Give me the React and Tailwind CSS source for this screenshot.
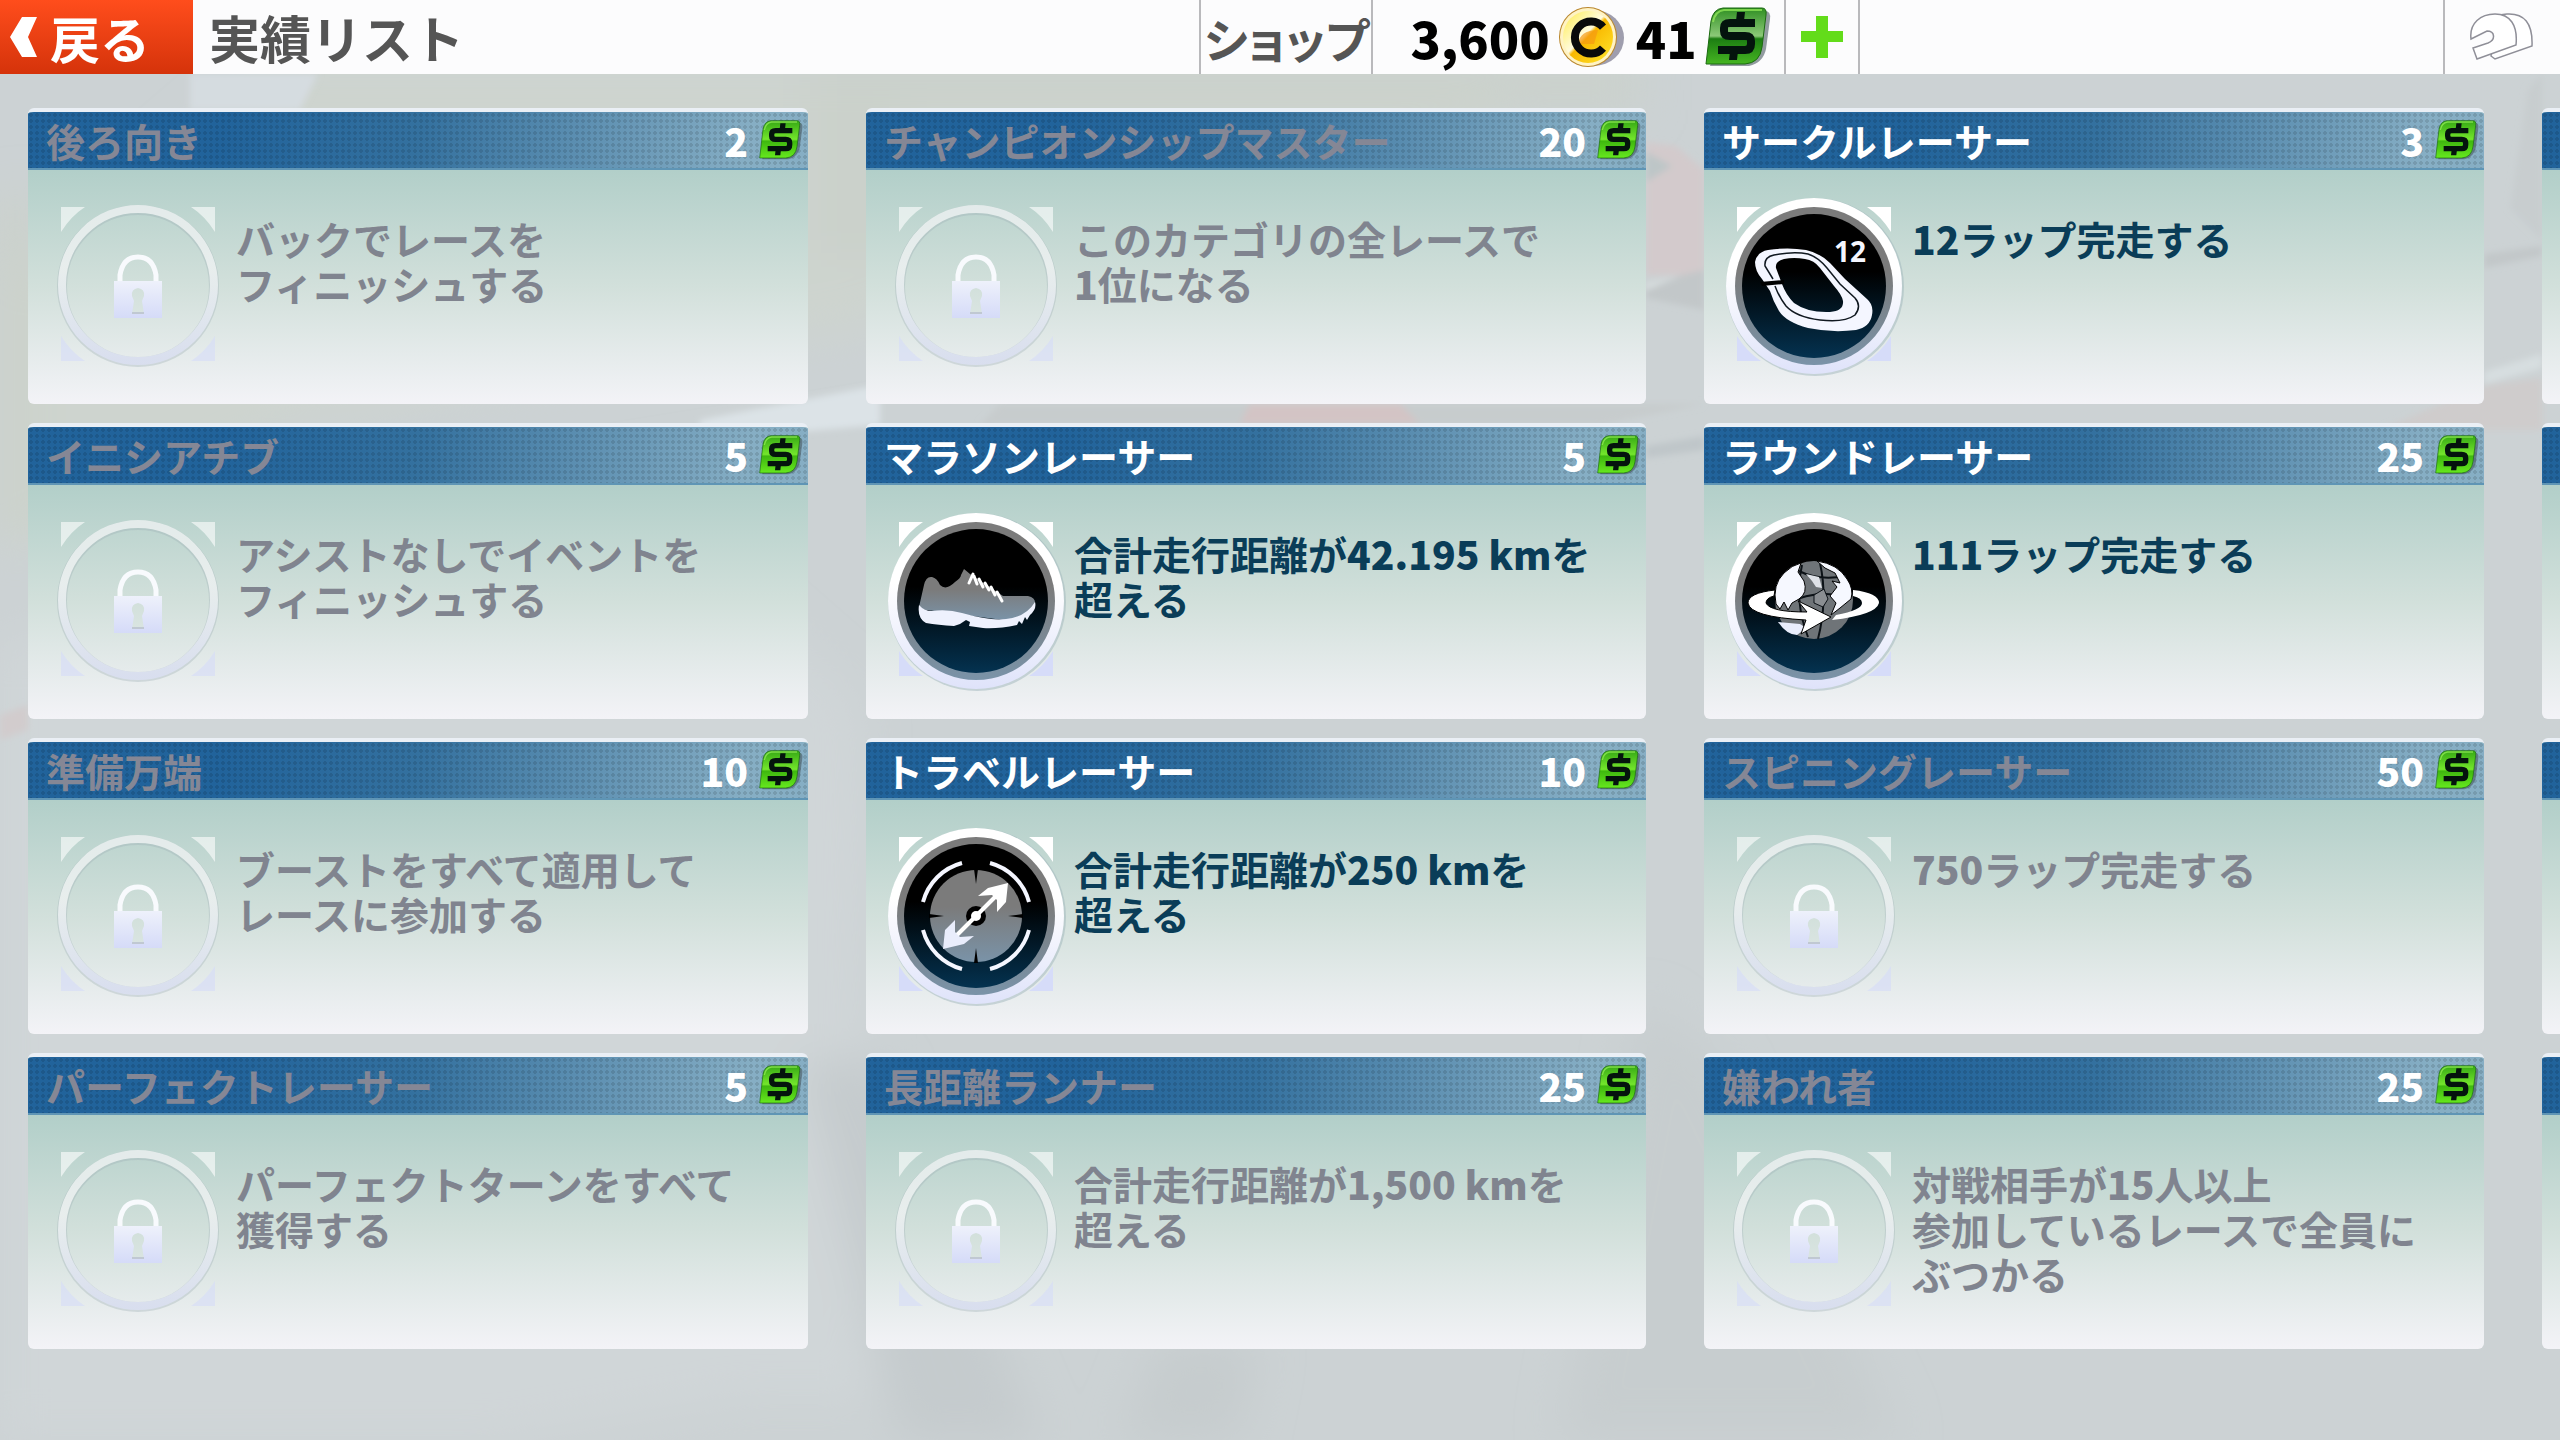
const achievements = [
  { title: '後ろ向き', reward: 2, text: 'バックでレースを\nフィニッシュする' },
  { title: 'イニシアチブ', reward: 5, text: 'アシストなしでイベントを\nフィニッシュする' },
  { title: '準備万端', reward: 10, text: 'ブーストをすべて適用して\nレースに参加する' },
  { title: 'パーフェクトレーサー', reward: 5, text: 'パーフェクトターンをすべて\n獲得する' },
  { title: 'チャンピオンシップマスター', reward: 20, text: 'このカテゴリの全レースで\n1位になる' },
  { title: 'マラソンレーサー', reward: 5, text: '合計走行距離が42.195 kmを\n超える', icon: 'shoe' },
  { title: 'トラベルレーサー', reward: 10, text: '合計走行距離が250 kmを\n超える', icon: 'compass' },
  { title: '長距離ランナー', reward: 25, text: '合計走行距離が1,500 kmを\n超える' },
  { title: 'サークルレーサー', reward: 3, text: '12ラップ完走する', icon: 'track' },
  { title: 'ラウンドレーサー', reward: 25, text: '111ラップ完走する', icon: 'globe' },
  { title: 'スピニングレーサー', reward: 50, text: '750ラップ完走する' },
  { title: '嫌われ者', reward: 25, text: '対戦相手が15人以上\n参加しているレースで全員に\nぶつかる' },
]

// shared gradients, referenced by id from the icons
function Gradients() {
  return (
    <svg className="absolute size-0" aria-hidden="true">
      <defs>
        <linearGradient id="frame" x1="0" y1="0" x2="0" y2="1">
          <stop offset="0.4" stopColor="#ffffff" />
          <stop offset="1" stopColor="#dfe3fa" />
        </linearGradient>
        <linearGradient id="disc" x1="0" y1="0" x2="0" y2="1">
          <stop offset="0.4" stopColor="#000000" />
          <stop offset="1" stopColor="#043250" />
        </linearGradient>
        <linearGradient id="rim" x1="0" y1="0" x2="0" y2="1">
          <stop offset="0.4" stopColor="#7b7b7b" />
          <stop offset="1" stopColor="#7a93a8" />
        </linearGradient>
        <linearGradient id="lock" x1="0" y1="0" x2="0" y2="1">
          <stop offset="0" stopColor="#eef1fb" />
          <stop offset="1" stopColor="#d5dbf8" />
        </linearGradient>
        <linearGradient id="gold" x1="0" y1="0" x2="1" y2="1">
          <stop offset="0" stopColor="#ffec4a" />
          <stop offset="0.45" stopColor="#fffbe0" />
          <stop offset="0.5" stopColor="#f9b800" />
          <stop offset="1" stopColor="#ffe82e" />
        </linearGradient>
        <linearGradient id="cashBright" x1="0" y1="0" x2="0" y2="1">
          <stop offset="0" stopColor="#35a814" />
          <stop offset="0.5" stopColor="#74e62c" />
          <stop offset="0.55" stopColor="#3fb80f" />
          <stop offset="1" stopColor="#66e81e" />
        </linearGradient>
        <linearGradient id="cashDeep" x1="0" y1="0" x2="0" y2="1">
          <stop offset="0" stopColor="#2f8f22" />
          <stop offset="0.5" stopColor="#8cc978" />
          <stop offset="0.55" stopColor="#1c7d12" />
          <stop offset="1" stopColor="#46b522" />
        </linearGradient>
      </defs>
    </svg>
  )
}

// faded photo of the race track behind the list
function Backdrop() {
  return (
    <svg
      className="absolute inset-0 -z-10 size-full"
      viewBox="0 0 2560 1440"
      preserveAspectRatio="none"
      aria-hidden="true"
    >
      <defs>
        <filter id="soft" x="-20%" y="-20%" width="140%" height="140%">
          <feGaussianBlur stdDeviation="22" />
        </filter>
        <filter id="edge">
          <feGaussianBlur stdDeviation="3" />
        </filter>
      </defs>
      <rect width="2560" height="1440" fill="#ccd2d4" />
      <g filter="url(#soft)">
        <path d="M280 60H1500V130L860 330L300 420L0 560V300Z" fill="#ced4cf" />
        <path d="M0 200L30 190V520L0 540Z" fill="#cbd1c7" />
        <path d="M810 60H1640V110H900V260H810Z" fill="#cbd1cb" />
        <path d="M0 640L700 560L860 700L870 1400H740L500 1440H0Z" fill="#d0d6d8" />
        <path d="M800 1060L880 1060L1040 1440H900Z" fill="#c5cbcd" />
        <path d="M1160 1340L1260 1340L1240 1440H1120Z" fill="#c6ccce" />
        <path d="M1640 1000L1720 1060L1900 1440H1560Z" fill="#c7cdcf" />
      </g>
      <g filter="url(#edge)">
        <path d="M190 74H318L300 110H190Z" fill="#d5dce0" />
        <path d="M700 420L880 385V425L700 440Z" fill="#dce3e7" />
        <path d="M0 715L28 705V730L0 740Z" fill="#d2cccd" />
        <path d="M1646 142L1676 146L1704 170V275L1646 275Z" fill="#d3cacc" />
        <path d="M1646 152L1672 166L1646 182Z" fill="#bdc6c7" />
        <path d="M1646 284L1704 270V310L1646 298Z" fill="#c2c7c9" />
        <path d="M1646 284L1680 276L1646 290Z" fill="#dbe1e2" />
        <path d="M1000 404L1704 404L1600 425H980Z" fill="#c7cccd" />
        <path d="M1250 404H1400L1420 424H1240Z" fill="#d3c4c5" />
        <path d="M1646 446L1704 436V450L1646 458Z" fill="#bfc6c9" />
        <path d="M2484 254L2542 246V256L2484 268Z" fill="#c2c7c9" />
        <path d="M2510 208L2542 240V74L2528 90Z" fill="#c8cdcf" />
        <path d="M2484 372L2542 354V368L2484 384Z" fill="#d7dee0" />
        <path d="M2484 386L2542 378V430H2380Z" fill="#cfcccc" />
      </g>
    </svg>
  )
}

function CashIcon({ className, fill }) {
  return (
    <svg className={className} viewBox="0 0 66 60" aria-hidden="true">
      <path d="M20 4H60Q66 4 65 12L61 42Q58 56 44 59H5Z" fill="#4b5a63" opacity="0.6" />
      <path d="M18 1H57Q62 1 61 8L57 40Q55 56 40 57H1L6 14Q8 2 18 1Z" fill={fill} stroke="#1b6a10" strokeWidth="1" />
      <path d="M8 15Q10 4 19 3H57" fill="none" stroke="#9af05c" strokeWidth="2" opacity="0.7" />
      <path
        d="M50 16H25Q19 16 19 21V24Q19 29 25 29H40Q46 29 46 34V37Q46 43 40 43H13"
        fill="none"
        stroke="#04140d"
        strokeWidth="8"
      />
      <path d="M32 5H40L39 14H31ZM25 44H33L32 53H24Z" fill="#04140d" />
    </svg>
  )
}

function CoinIcon() {
  return (
    <svg className="h-[62px] w-[66px]" viewBox="0 0 66 62" aria-hidden="true">
      <ellipse cx="36" cy="32" rx="30" ry="28" fill="#77768c" opacity="0.7" />
      <ellipse cx="30" cy="31" rx="29" ry="30" fill="#b9862c" />
      <ellipse cx="30" cy="31" rx="28" ry="29" fill="#fff3c4" />
      <ellipse cx="30" cy="31" rx="25" ry="26" fill="url(#gold)" />
      <path d="M20 38Q22 24 40 24L36 38Z" fill="#f59a12" opacity="0.7" />
      <path d="M45 21A16 16 0 1 0 45 42" fill="none" stroke="#0a0a0a" strokeWidth="8" />
    </svg>
  )
}

function HelmetIcon() {
  return (
    <svg className="h-12 w-16" viewBox="0 0 64 48" fill="#ffffff" stroke="#8f8f98" strokeWidth="1.5" aria-hidden="true">
      <path d="M30 2L38 1C55 0 64 10 63 33L26 46L22 43Z" />
      <path d="M2 26C0 10 12 1 26 1C41 1 49 12 47 32L8 46L4 35L19 30C27 27 26 18 18 18Z" />
    </svg>
  )
}

function Corners() {
  return (
    <>
      <path d="M13 11H37Q23 20 13 36ZM167 11H143Q157 20 167 36Z" fill="#ffffff" />
      <path d="M13 165H37Q23 156 13 140ZM167 165H143Q157 156 167 140Z" fill="#d6dcf9" />
    </>
  )
}

function LockBadge() {
  return (
    <svg className="size-[180px] shrink-0" viewBox="0 0 180 180" aria-hidden="true">
      <g opacity="0.6">
        <Corners />
      </g>
      <circle cx="90" cy="90" r="76" fill="none" stroke="#9fb0b4" strokeWidth="10" opacity="0.35" />
      <circle cx="90" cy="89" r="76" fill="none" stroke="url(#frame)" strokeWidth="8" opacity="0.65" />
      <path d="M72 87V79Q75 61 90 61Q105 61 108 79V87" fill="none" stroke="#f8fafd" strokeWidth="5" />
      <path
        d="M66 85H114V122H66ZM90 92Q83 93 84 100L86 105L84 118H96L94 105L96 100Q97 93 90 92Z"
        fill="url(#lock)"
        fillRule="evenodd"
      />
      <path d="M84 116H96V118H84Z" fill="#c0c8d2" />
    </svg>
  )
}

function Shoe() {
  return (
    <g>
      <path
        d="M33 96L38 74Q40 65 46 66Q51 67 54 74Q60 80 69 71Q75 67 75 64L78 58L84 63L117 85H142Q150 87 149 93L140 106L117 109L33 98Z"
        fill="url(#rim)"
      />
      <path
        d="M33 94Q38 100 46 100Q62 98 76 102Q104 110 120 108Q140 106 149 91Q151 98 144 104L141 109L139 106L136 113L133 110L131 114Q112 118 97 117L83 115L84 111L80 109L74 113L68 115Q52 114 40 112Q31 107 33 94Z"
        fill="#eef1fd"
      />
      <path
        d="M83 72L87 63M91 73L88 65M97 76L93 68M103 79L99 72M109 84L105 76M116 90L111 81"
        stroke="#ffffff"
        strokeWidth="3"
        strokeLinecap="round"
        fill="none"
      />
    </g>
  )
}

function Compass() {
  return (
    <g>
      <circle cx="90" cy="90" r="46" fill="url(#rim)" />
      <path d="M88 43H92L90 58ZM88 137H92L90 122ZM43 88V92L58 90ZM137 88V92L122 90Z" fill="#000000" />
      <path
        d="M37 76A55 55 0 0 1 76 37M104 37A55 55 0 0 1 143 76M143 104A55 55 0 0 1 104 143M76 143A55 55 0 0 1 37 104"
        fill="none"
        stroke="#f4f6ff"
        strokeWidth="4"
      />
      <circle cx="90" cy="90" r="10" fill="#000000" />
      <path d="M70 110L110 70" stroke="#ffffff" strokeWidth="4" />
      <circle cx="90" cy="90" r="5" fill="#ffffff" />
      <path d="M122 57L120 76L111 86V74L106 69L92 70L102 62Z" fill="#ffffff" />
      <path d="M57 123L59 104L69 94V106L74 111L88 110L78 118Z" fill="#e9edfc" />
    </g>
  )
}

function Track() {
  return (
    <g>
      <path
        d="M31 66Q33 56 44 54Q64 51 82 54Q96 57 106 67L121 83L143 103Q150 109 148 119Q146 131 132 134Q108 137 84 132Q62 126 55 115Q49 105 46 95L38 83Q31 75 31 66ZM52 72L58 88Q62 99 70 107Q84 117 106 116Q120 115 119 105Q118 99 110 90L96 72Q90 64 81 63Q70 61 60 63Q51 65 52 72Z"
        fill="#f4f6ff"
        fillRule="evenodd"
      />
      <path
        d="M49 83L41 70Q40 61 50 59Q70 55 84 58Q94 61 103 72L116 88L131 102Q138 110 131 119Q120 127 96 124Q72 121 62 110Q55 101 51 90"
        fill="none"
        stroke="#101820"
        strokeWidth="1.5"
      />
      <path d="M36 86L60 84V88L38 90Z" fill="#000000" />
      <text x="110" y="66" fill="#f4f6ff" fontSize="28" fontWeight="700" fontFamily="'Open Sans', sans-serif">
        12
      </text>
    </g>
  )
}

function Globe() {
  return (
    <g>
      <circle cx="90" cy="89" r="39" fill="#6f7478" />
      <path d="M75 60Q94 70 122 65M65 92Q90 78 127 86M96 52Q104 88 94 128M78 54Q70 90 84 126" fill="none" stroke="#0b1116" strokeWidth="2" />
      <path
        d="M52 93Q48 74 60 62Q68 54 77 52L74 61L80 70Q84 82 75 88L68 92L64 99L60 91L56 98Z"
        fill="#f6f8ff"
        stroke="#000000"
        strokeWidth="1"
      />
      <path
        d="M93 50Q114 53 123 68Q130 78 127 88L116 97L107 104L112 92L106 85L113 76L108 70L116 72L111 62L101 57Z"
        fill="#f6f8ff"
        stroke="#000000"
        strokeWidth="1"
      />
      <path d="M82 63L95 66L98 77L92 76L88 70Z" fill="#dfe2e8" />
      <path d="M90 84L100 78L104 88L99 96L90 92Z" fill="#8a8e92" stroke="#0b1116" strokeWidth="1" />
      <path d="M54 111Q63 124 73 124L82 117L76 113Z" fill="#e9edfc" />
      <path
        d="M51 79Q24 82 24 92Q26 106 82 109L77 123L107 106L74 90L83 101Q46 101 42 92Q42 87 50 85Z"
        fill="#ffffff"
        stroke="#000000"
        strokeWidth="1"
      />
      <path d="M129 79Q155 82 155 92Q152 104 108 109L112 104Q138 99 138 92Q138 87 129 85Z" fill="#ffffff" />
    </g>
  )
}

const artworks = { shoe: Shoe, compass: Compass, track: Track, globe: Globe }

function MedalBadge({ icon }) {
  const Artwork = artworks[icon]
  return (
    <svg className="size-[180px] shrink-0" viewBox="0 0 180 180" aria-hidden="true">
      <Corners />
      <circle cx="91" cy="91" r="89" fill="#9fb5bb" opacity="0.5" />
      <circle cx="90" cy="90" r="88" fill="url(#frame)" />
      <circle cx="90" cy="90" r="79" fill="url(#rim)" />
      <circle cx="90" cy="90" r="72" fill="url(#disc)" />
      <Artwork />
    </svg>
  )
}

// numbers and units are set heavier than the Japanese around them
function MixedText({ text }) {
  return text.split(/([0-9][0-9., km]*)/).map((part, index) =>
    index % 2 === 1 ? <b key={index} className="font-black">{part}</b> : part
  )
}

function AchievementCard({ title, reward, text, icon }) {
  const unlocked = Boolean(icon)
  return (
    <article className="flex min-h-[296px] flex-col overflow-hidden rounded-md border-t-4 border-[#eaeff5] bg-linear-to-b from-[#b2cfc9] from-20% via-[#d2e0db] via-60% to-[#f3f3f7]">
      <header className="flex h-[58px] items-center justify-between border-b-2 border-[#5f95b5] bg-[radial-gradient(#0000001c_40%,transparent_45%),linear-gradient(100deg,#21639b_25%,#34719f_50%,#86aec4_92%)] bg-[size:6px_6px,100%_100%] pr-1 pl-[18px]">
        <h2 className={`text-[39px] leading-none font-bold ${unlocked ? 'text-white' : 'text-[#858795]'}`}>{title}</h2>
        <p className="flex items-center gap-2.5 text-[39px] leading-none font-black text-white">
          {reward}
          <CashIcon className="h-10 w-[46px]" fill="url(#cashBright)" />
        </p>
      </header>
      <div className="flex flex-1 gap-2 pt-[26px] pl-5">
        {unlocked ? <MedalBadge icon={icon} /> : <LockBadge />}
        <p className={`pt-5 text-[39px] leading-[45px] font-bold whitespace-pre ${unlocked ? 'text-[#0a3d58]' : 'text-[#80848f]'}`}>
          <MixedText text={text} />
        </p>
      </div>
    </article>
  )
}

// the next column only peeks in from the right edge
function PeekCard() {
  return (
    <div className="flex min-h-[296px] flex-col overflow-hidden rounded-md border-t-4 border-[#eaeff5] bg-linear-to-b from-[#b2cfc9] from-20% via-[#d2e0db] via-60% to-[#f3f3f7]">
      <div className="h-[58px] border-b-2 border-[#5f95b5] bg-[#21639b] bg-[radial-gradient(#0000001c_40%,transparent_45%)] bg-[size:6px_6px]" />
    </div>
  )
}

export default function App() {
  return (
    <div className="relative isolate min-h-screen overflow-hidden font-['Noto_Sans_CJK_JP',sans-serif]" lang="ja">
      <Gradients />
      <Backdrop />
      <header className="flex h-[74px] items-stretch bg-[#fcfcfd] text-[#555555]">
        <div className="flex flex-[12] items-stretch">
          <button className="flex w-[193px] items-center gap-3 bg-linear-to-b from-[#ff4d1c] to-[#d5330a] pl-2.5 text-[50px] leading-none font-bold text-white">
            <svg className="h-10 w-7 shrink-0" viewBox="0 0 28 40" aria-hidden="true">
              <path d="M12 0H27L18 20L27 40H12L0 20Z" fill="#ffffff" />
            </svg>
            戻る
          </button>
          <h1 className="flex items-center pl-4 text-[51px] leading-none font-bold">実績リスト</h1>
        </div>
        <div className="flex items-stretch">
          <button className="w-[174px] border-x-2 border-[#b9b9bc] text-[47px] leading-none font-bold [font-feature-settings:'palt']">
            ショップ
          </button>
          <div className="flex w-[411px] items-center pl-[37px] text-[50px] leading-none font-black text-black">
            3,600
            <span className="mr-3 ml-2"><CoinIcon /></span>
            41
            <CashIcon className="ml-2 h-[60px] w-[66px]" fill="url(#cashDeep)" />
          </div>
          <button aria-label="追加" className="flex w-[76px] items-center justify-center border-x-2 border-[#b9b9bc]">
            <svg className="size-[42px]" viewBox="0 0 42 42" aria-hidden="true">
              <path d="M15 0H27V15H42V26H27V42H15V26H0V15H15Z" fill="#63dc1a" />
            </svg>
          </button>
        </div>
        <div className="flex flex-[7] items-stretch justify-end">
          <button aria-label="プロフィール" className="flex w-[117px] items-center border-l-2 border-[#b9b9bc] pl-6">
            <HelmetIcon />
          </button>
        </div>
      </header>
      <main className="grid auto-cols-[780px] grid-flow-col grid-rows-4 gap-x-[58px] gap-y-[19px] overflow-hidden pt-[34px] pl-7">
        {achievements.map((item) => (
          <AchievementCard key={item.title} {...item} />
        ))}
        {[1, 2, 3, 4].map((n) => (
          <PeekCard key={n} />
        ))}
      </main>
    </div>
  )
}
